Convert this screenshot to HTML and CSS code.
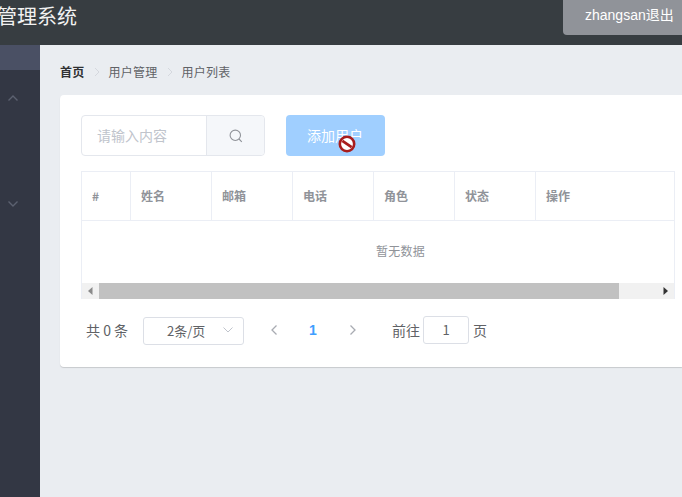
FILE: index.html
```html
<!DOCTYPE html>
<html lang="zh-CN">
  <head>
    <meta charset="UTF-8" />
    <meta name="viewport" content="width=device-width, initial-scale=1.0" />
    <title>管理系统</title>
    <link rel="stylesheet" href="styles.css">
  </head>
  <body>
    <div class="home_header">
      <div class="home_title">管理系统</div>
      <a class="home_logout">zhangsan退出</a>
    </div>
    <div class="home_body">
      <div class="home_aside">
        <div class="aside_toggle"></div>
        <div class="aside_item aside_item-open">
          <svg width="12" height="8" viewBox="0 0 12 8"><path d="M1.5 6.5 6 2l4.5 4.5" /></svg>
        </div>
        <div class="aside_subitem"></div>
        <div class="aside_item">
          <svg width="12" height="8" viewBox="0 0 12 8"><path d="M1.5 1.5 6 6l4.5-4.5" /></svg>
        </div>
      </div>
      <div class="home_main">
        <div class="breadcrumb">
          <span class="breadcrumb_home">首页</span>
          <svg class="breadcrumb_sep" width="6" height="10" viewBox="0 0 6 10"><path d="M1 1l4 4-4 4" /></svg>
          <span>用户管理</span>
          <svg class="breadcrumb_sep" width="6" height="10" viewBox="0 0 6 10"><path d="M1 1l4 4-4 4" /></svg>
          <span>用户列表</span>
        </div>
        <div class="card">
          <div class="toolbar">
            <div class="search">
              <div class="search_input">请输入内容</div>
              <div class="search_btn">
                <svg width="16" height="16" viewBox="0 0 16 16"><circle cx="7.3" cy="7.3" r="5.2" /><path d="M11 11l2.8 2.8" /></svg>
              </div>
            </div>
            <div class="add_btn">
              添加用户
              <svg class="add_btn-cursor" width="20" height="20" viewBox="0 0 20 20">
                <circle cx="10" cy="10" r="7.2" fill="#fff" stroke="#a81c1c" stroke-width="2.6" />
                <path d="M5.4 6.9l9.2 6.2" stroke="#a81c1c" stroke-width="2.8" />
              </svg>
            </div>
          </div>
          <div class="table">
            <div class="table_head">
              <div class="table_th">#</div>
              <div class="table_th">姓名</div>
              <div class="table_th">邮箱</div>
              <div class="table_th">电话</div>
              <div class="table_th">角色</div>
              <div class="table_th">状态</div>
              <div class="table_th">操作</div>
            </div>
            <div class="table_empty">暂无数据</div>
            <div class="scrollbar">
              <div class="scrollbar_arrow"><svg width="5" height="8" viewBox="0 0 5 8"><path d="M4.500 0v8L0 4z" fill="#8a8a8a" /></svg></div>
              <div class="scrollbar_thumb"></div>
              <div class="scrollbar_arrow"><svg width="5" height="8" viewBox="0 0 5 8"><path d="M.5 0v8L5 4z" fill="#333" /></svg></div>
            </div>
          </div>
          <div class="pager">
            <span class="pager_total">共 0 条</span>
            <div class="pager_size">
              <span>2条/页</span>
              <svg width="12" height="8" viewBox="0 0 12 8"><path d="M1.500 1.500 6 6l4.500-4.500" /></svg>
            </div>
            <svg class="pager_prev" width="8" height="12" viewBox="0 0 8 12"><path d="M6.500 1.500 2 6l4.500 4.500" /></svg>
            <span class="pager_num">1</span>
            <svg class="pager_next" width="8" height="12" viewBox="0 0 8 12"><path d="M1.500 1.500 6 6l-4.500 4.500" /></svg>
            <span class="pager_goto">前往</span>
            <div class="pager_input">1</div>
            <span class="pager_unit">页</span>
          </div>
        </div>
      </div>
    </div>
  </body>
</html>
```

FILE: styles.css
```css
html,
body {
  margin: 0;
  height: 100%;
}

body {
  width: 682px;
  height: 497px;
  overflow: hidden;
  display: flex;
  flex-direction: column;
  font-family: "Noto Sans CJK SC", "Liberation Sans", sans-serif;
  color: #606266;
}

svg {
  display: block;
  fill: none;
}

.home_header {
  height: 45px;
  flex: none;
  background-color: #373d41;
  display: flex;
  justify-content: space-between;
  align-items: flex-start;
}

.home_title {
  margin-left: -3px;
  line-height: 32px;
  font-size: 20px;
  color: #f2f2f2;
}

.home_logout {
  width: 119px;
  height: 35px;
  box-sizing: border-box;
  padding-left: 22px;
  line-height: 31px;
  font-family: "Liberation Sans", "Noto Sans CJK SC", sans-serif;
  font-size: 14px;
  white-space: nowrap;
  color: #fff;
  background-color: #909399;
  border-bottom-left-radius: 4px;
}

.home_body {
  flex: 1;
  display: flex;
}

.home_aside {
  width: 40px;
  flex: none;
  background-color: #333744;
}

.aside_toggle {
  height: 25px;
  background-color: #4a5064;
}

.aside_item {
  height: 56px;
  padding-left: 7px;
  display: flex;
  align-items: center;
}

.aside_item svg path {
  stroke: #5c6170;
  stroke-width: 1.4;
}

.aside_subitem {
  height: 50px;
}

.home_main {
  flex: 1;
  min-width: 0;
  background-color: #eaedf1;
  padding: 19px 0 0 20px;
}

.breadcrumb {
  height: 31px;
  display: flex;
  align-items: flex-start;
  font-size: 12px;
  letter-spacing: 0.25px;
  line-height: 15px;
  color: #606266;
}

.breadcrumb_home {
  font-weight: 700;
  color: #303133;
}

.breadcrumb_sep {
  margin: 3px 9px 0;
}

.breadcrumb_sep path {
  stroke: #d5d8de;
}

.card {
  height: 272px;
  box-sizing: border-box;
  padding: 20px 7px 0 21px;
  background-color: #fff;
  border-radius: 4px 0 0 4px;
  box-shadow: 0 1px 1px rgba(0, 0, 0, 0.15);
}

.toolbar {
  display: flex;
  gap: 21px;
}

.search {
  width: 184px;
  height: 41px;
  box-sizing: border-box;
  display: flex;
  border: 1px solid #e4e7ed;
  border-radius: 4px;
}

.search_input {
  flex: 1;
  padding-left: 15px;
  line-height: 39px;
  font-size: 14px;
  color: #c0c4cc;
}

.search_btn {
  width: 57px;
  background-color: #f5f7fa;
  border-left: 1px solid #e4e7ed;
  border-radius: 0 4px 4px 0;
  display: flex;
  align-items: center;
  justify-content: center;
}

.search_btn svg circle,
.search_btn svg path {
  stroke: #909399;
  stroke-width: 1.1;
}

.add_btn {
  position: relative;
  width: 99px;
  height: 41px;
  box-sizing: border-box;
  padding-left: 21px;
  line-height: 40px;
  font-size: 14px;
  color: #fff;
  background-color: #a0cfff;
  border-radius: 4px;
}

.add_btn-cursor {
  position: absolute;
  left: 51px;
  top: 19px;
}

.table {
  margin-top: 15px;
  width: 594px;
  box-sizing: border-box;
  border: solid #ebeef5;
  border-width: 1px 1px 0 1px;
}

.table_head {
  height: 49px;
  box-sizing: border-box;
  display: grid;
  grid-template-columns: 49px 81px 81px 81px 81px 81px 1fr;
  border-bottom: 1px solid #ebeef5;
}

.table_th {
  padding-left: 10px;
  line-height: 47px;
  font-size: 12px;
  font-weight: 700;
  color: #909399;
  border-right: 1px solid #ebeef5;
}

.table_th:last-child {
  border-right: none;
}

.table_empty {
  height: 62px;
  padding-left: 294px;
  line-height: 59px;
  font-size: 12px;
  letter-spacing: 0.25px;
  color: #909399;
}

.scrollbar {
  height: 16px;
  display: flex;
  background-color: #f1f1f1;
}

.scrollbar_arrow {
  width: 17px;
  flex: none;
  display: flex;
  align-items: center;
  justify-content: center;
}

.scrollbar_thumb {
  width: 520px;
  background-color: #c1c1c1;
}

.scrollbar_arrow:last-child {
  margin-left: auto;
}

.pager {
  margin-top: 18px;
  height: 28px;
  padding-left: 5px;
  display: flex;
  align-items: center;
  font-size: 14px;
  color: #606266;
}

.pager_total {
  width: 57px;
  flex: none;
  margin-bottom: 3px;
}

.pager_size {
  width: 101px;
  height: 28px;
  box-sizing: border-box;
  flex: none;
  padding: 0 9px 2px 23px;
  display: flex;
  align-items: center;
  justify-content: space-between;
  font-size: 13px;
  border: 1px solid #dcdfe6;
  border-radius: 3px;
}

.pager_size svg path {
  stroke: #c0c4cc;
}

.pager_prev {
  margin-left: 26px;
  margin-bottom: 2px;
}

.pager_prev path,
.pager_next path {
  stroke: #a8abb2;
  stroke-width: 1.3;
}

.pager_next {
  margin-bottom: 2px;
}

.pager_num {
  margin: 0 32px 2px 31px;
  width: 8px;
  text-align: center;
  font-family: "Liberation Sans", sans-serif;
  font-weight: 700;
  color: #409eff;
}

.pager_goto {
  margin-left: 35px;
  margin-right: 3px;
  margin-bottom: 3px;
}

.pager_input {
  width: 46px;
  height: 28px;
  box-sizing: border-box;
  margin-right: 4px;
  margin-top: -2px;
  line-height: 26px;
  font-size: 13px;
  text-align: center;
  border: 1px solid #dcdfe6;
  border-radius: 3px;
}

.pager_unit {
  margin-bottom: 3px;
}
```
